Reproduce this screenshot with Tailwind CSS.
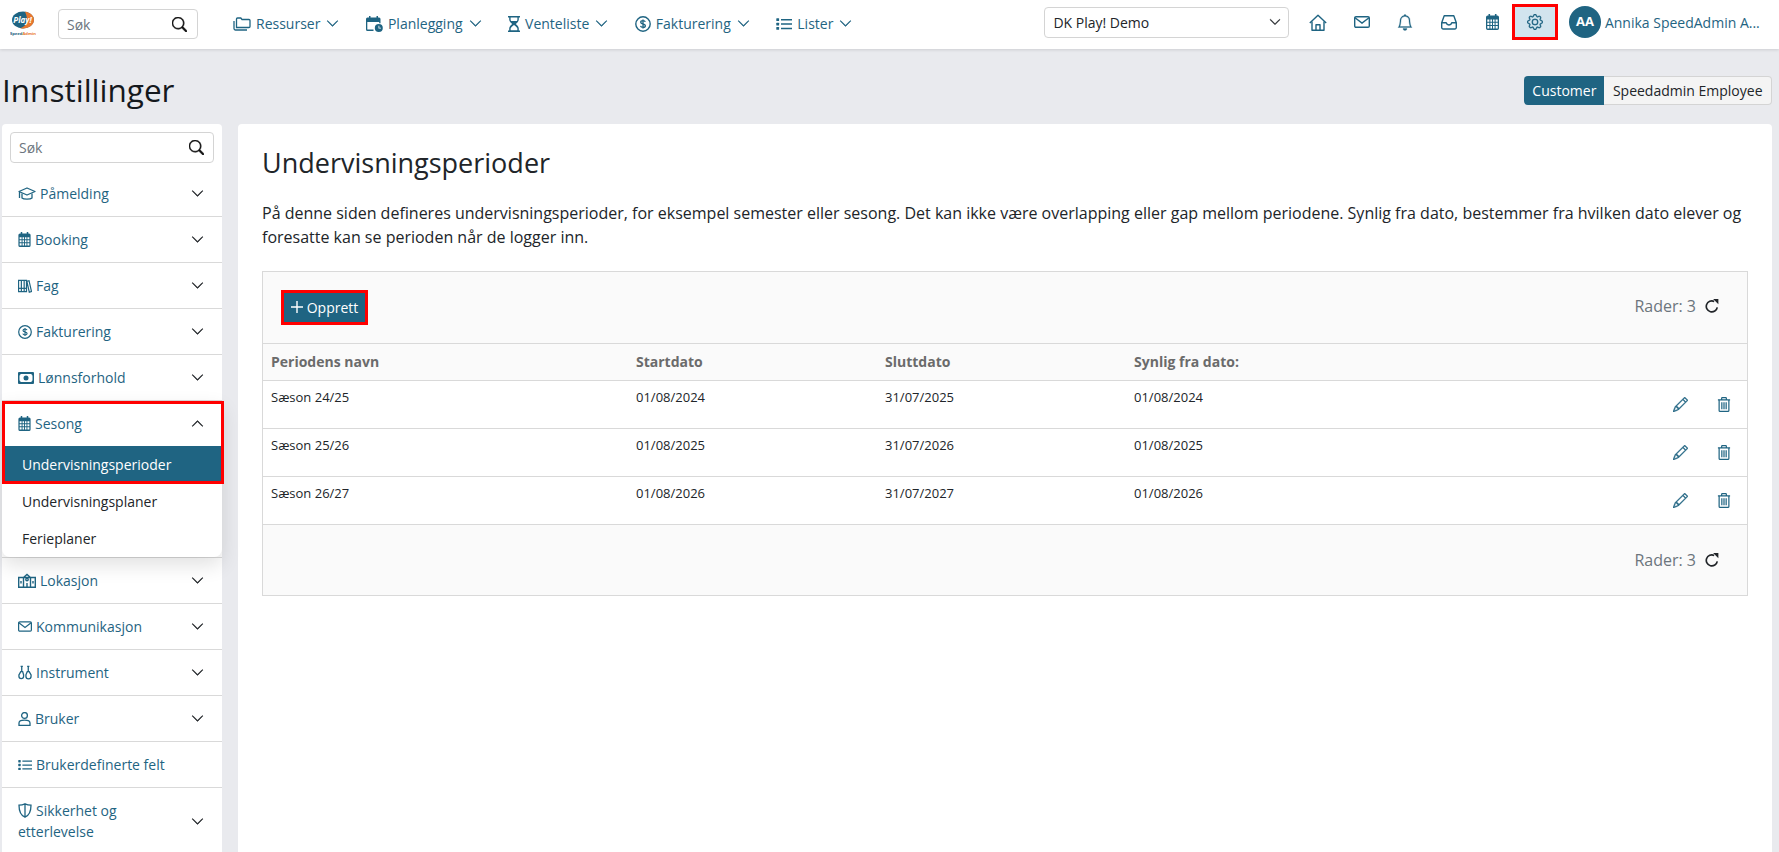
<!DOCTYPE html>
<html lang="no">
<head>
<meta charset="utf-8">
<title>Innstillinger</title>
<script src="https://cdn.jsdelivr.net/npm/@tailwindcss/browser@4"></script>
</head>
<body class="h-screen w-full overflow-hidden bg-[#e9eaee] font-['Open_Sans',sans-serif] text-[#212529]">
<svg class="hidden" aria-hidden="true">
  <symbol id="down" viewBox="0 0 16 16"><path fill="currentColor" stroke="currentColor" stroke-width=".7" fill-rule="evenodd" d="M1.646 4.646a.5.5 0 0 1 .708 0L8 10.293l5.646-5.647a.5.5 0 0 1 .708.708l-6 6a.5.5 0 0 1-.708 0l-6-6a.5.5 0 0 1 0-.708z"/></symbol>
  <symbol id="up" viewBox="0 0 16 16"><path fill="currentColor" stroke="currentColor" stroke-width=".7" fill-rule="evenodd" d="M7.646 4.646a.5.5 0 0 1 .708 0l6 6a.5.5 0 0 1-.708.708L8 5.707l-5.646 5.647a.5.5 0 0 1-.708-.708l6-6z"/></symbol>
  <symbol id="search" viewBox="0 0 16 16"><path fill="currentColor" stroke="currentColor" stroke-width=".6" d="M11.742 10.344a6.5 6.5 0 1 0-1.397 1.398h-.001c.03.04.062.078.098.115l3.85 3.85a1 1 0 0 0 1.415-1.414l-3.85-3.85a1.007 1.007 0 0 0-.115-.1zM12 6.5a5.5 5.5 0 1 1-11 0 5.5 5.5 0 0 1 11 0z"/></symbol>
  <symbol id="cal" viewBox="0 0 13 16"><path fill="currentColor" d="M2.500 0h1.600v1.500h4.800V0h1.600v1.500h.8A1.700 1.700 0 0 1 13 3.200v11.100A1.700 1.700 0 0 1 11.300 16H1.700A1.700 1.700 0 0 1 0 14.300V3.200A1.700 1.700 0 0 1 1.700 1.500h.8z"/><path fill="#fff" d="M1.300 5.500h2.100v2.200H1.300zM4.400 5.500h1.600v2.200H4.400zM7 5.500h1.600v2.200H7zM9.600 5.500h2.100v2.200H9.600zM1.300 8.700h2.100v2.200H1.300zM4.400 8.700h1.600v2.200H4.400zM7 8.700h1.600v2.200H7zM9.600 8.700h2.100v2.200H9.600zM1.300 11.900h2.100v2.500H1.300zM4.400 11.900h1.600v2.500H4.400zM7 11.900h1.600v2.500H7zM9.600 11.900h2.100v2.500H9.600z"/></symbol>
  <symbol id="dollar" viewBox="0 0 16 16"><circle cx="8" cy="8" r="7.2" fill="none" stroke="currentColor" stroke-width="1.400"/><path fill="none" stroke="currentColor" stroke-width="1.300" d="M10.300 5.900C10 4.900 9.100 4.600 8 4.600c-1.300 0-2.300.6-2.300 1.700 0 2.400 4.700 1 4.700 3.400 0 1.100-1 1.700-2.400 1.700-1.300 0-2.200-.5-2.500-1.500M8 3.400v9.200"/></symbol>
  <symbol id="list" viewBox="0 0 16 16"><path fill="currentColor" d="M5 2.900h11v1.500H5zM5 7.300h11v1.500H5zM5 11.700h11v1.500H5z"/><rect x="0.300" y="2.300" width="2.800" height="2.700" rx=".5" fill="currentColor"/><rect x="0.300" y="6.700" width="2.800" height="2.700" rx=".5" fill="currentColor"/><rect x="0.300" y="11.100" width="2.800" height="2.700" rx=".5" fill="currentColor"/></symbol>
  <symbol id="env" viewBox="0 0 16 12"><rect x=".7" y=".7" width="14.600" height="10.600" rx="1.300" fill="none" stroke="currentColor" stroke-width="1.400"/><path d="M1 1.700 8 7l7-5.300" fill="none" stroke="currentColor" stroke-width="1.400"/></symbol>
  <symbol id="pencil" viewBox="0 0 16 16"><path fill="currentColor" stroke="currentColor" stroke-width=".4" d="M12.146.146a.5.5 0 0 1 .708 0l3 3a.5.5 0 0 1 0 .708l-10 10a.5.5 0 0 1-.168.11l-5 2a.5.5 0 0 1-.65-.65l2-5a.5.5 0 0 1 .11-.168l10-10zM11.207 2.500 13.500 4.793 14.793 3.500 12.500 1.207 11.207 2.500zm1.586 3L10.500 3.207 4 9.707V10h.5a.5.5 0 0 1 .5.5v.5h.5a.5.5 0 0 1 .5.5v.5h.293l6.500-6.500zm-9.761 5.175-.106.106-1.528 3.821 3.821-1.528.106-.106A.5.5 0 0 1 5 12.500V12h-.5a.5.5 0 0 1-.5-.5V11h-.5a.5.5 0 0 1-.468-.325z"/></symbol>
  <symbol id="trash" viewBox="0 0 14 16"><path fill="none" stroke="currentColor" stroke-width="1.300" d="M.5 3h13M4.500 3V1.300a.7.7 0 0 1 .7-.7h3.600a.7.7 0 0 1 .7.7V3M1.800 3v11.300a1 1 0 0 0 1 1h8.400a1 1 0 0 0 1-1V3M4.700 5.500v7.500M7 5.500v7.500M9.300 5.500v7.500"/></symbol>
  <symbol id="refresh" viewBox="0 0 16 16"><path fill="none" stroke="currentColor" stroke-width="1.900" d="M14 9.500A6.300 6.300 0 1 1 10.500 2.800"/><path fill="currentColor" d="M9.300 0h6v6z"/></symbol>
</svg>

<header class="relative z-20 flex h-[49px] items-center bg-white shadow-[0_1px_3px_rgba(0,0,0,0.12)]">
  <div class="ml-[10px] mt-[-3px] w-[26px] shrink-0">
    <svg viewBox="0 0 26 26" class="h-[26px] w-[26px]">
      <ellipse cx="13" cy="10" rx="11" ry="8.500" fill="#1f6482"/>
      <path d="M15 1.700c5.500.6 9 4 9 8.300 0 4.800-4.800 8.500-11 8.500-1 0-2-.1-3-.3 4-1 7-4.500 7-8 0-3.500-1-6.500-2-8.500z" fill="#e8782f"/>
      <text x="12.500" y="13" font-size="8" font-weight="700" font-style="italic" fill="#fff" text-anchor="middle" font-family="Open Sans">Play!</text>
      <text x="13" y="25" font-size="4.200" font-weight="700" fill="#1f6482" text-anchor="middle" font-family="Open Sans">Speed<tspan fill="#e8782f">Admin</tspan></text>
    </svg>
  </div>
  <div class="ml-[22px] mt-[-1px] flex h-[30px] w-[140px] shrink-0 items-center rounded border border-[#d4d4d4] bg-white pl-2 pr-[10px]">
    <input placeholder="Søk" class="w-full min-w-0 bg-transparent text-[14px] outline-none placeholder:text-[#6c757d]">
    <svg class="h-[15px] w-[15px] shrink-0 text-[#111]"><use href="#search"/></svg>
  </div>
  <nav class="ml-[35px] mb-[2px] flex items-center gap-[26.500px] text-[14px] text-[#1f6482]">
    <a class="flex items-center gap-[5px]"><svg viewBox="0 0 18 16" class="h-[16px] w-[18px]" fill="none" stroke="currentColor" stroke-width="1.300"><path d="M3.500 11.500V3a1 1 0 0 1 1-1h3.300l1.200 1.500h7a1 1 0 0 1 1 1v6a1 1 0 0 1-1 1z"/><path d="M1 5v7.500a1.500 1.500 0 0 0 1.500 1.500H14"/></svg>Ressurser<svg class="ml-[1px] h-[13px] w-[13px]"><use href="#down"/></svg></a>
    <a class="flex items-center gap-[5px]"><svg viewBox="0 0 17 16" class="h-[16px] w-[17px]" fill="currentColor"><path fill-rule="evenodd" d="M3 0h1.500v1.500h6V0H12v1.500h1a1.500 1.500 0 0 1 1.500 1.500v4.200h-1.300V6H1.300v7.500h6.200V15H1.500A1.500 1.500 0 0 1 0 13.500V3a1.500 1.500 0 0 1 1.500-1.500H3z"/><circle cx="12.800" cy="12" r="4"/><path d="M12.500 9.800h.8v2h1.700v.8h-2.500z" fill="#fff"/></svg>Planlegging<svg class="ml-[1px] h-[13px] w-[13px]"><use href="#down"/></svg></a>
    <a class="flex items-center gap-[5px]"><svg viewBox="0 0 12 16" class="h-[16px] w-[12px]" fill="currentColor"><path fill-rule="evenodd" d="M0 0h12v1.400h-1.200v2.100c0 1.700-1.500 3.300-3 4.500 1.500 1.200 3 2.800 3 4.500v2.100H12V16H0v-1.400h1.200v-2.100c0-1.700 1.500-3.300 3-4.500-1.500-1.200-3-2.800-3-4.500V1.400H0zm2.600 1.400v2c0 .5.200 1 .5 1.500h5.800c.3-.5.500-1 .5-1.500v-2zM6 8.900c-1.800 1.300-3.400 2.600-3.400 3.800l.1 1.500h6.600l.1-1.500C9.400 11.500 7.800 10.200 6 8.900z"/></svg>Venteliste<svg class="ml-[1px] h-[13px] w-[13px]"><use href="#down"/></svg></a>
    <a class="flex items-center gap-[5px]"><svg class="h-[16px] w-[16px]"><use href="#dollar"/></svg>Fakturering<svg class="ml-[1px] h-[13px] w-[13px]"><use href="#down"/></svg></a>
    <a class="flex items-center gap-[5px]"><svg class="h-[16px] w-[16px]"><use href="#list"/></svg>Lister<svg class="ml-[1px] h-[13px] w-[13px]"><use href="#down"/></svg></a>
  </nav>
  <div class="ml-[192px] mb-[5px] flex h-[31px] w-[245px] shrink-0 items-center justify-between rounded border border-[#d4d4d4] bg-white pl-2 pr-[7px] text-[14px] text-[#212529]">
    <span>DK Play! Demo</span>
    <svg class="h-[12px] w-[12px]"><use href="#down"/></svg>
  </div>
  <div class="ml-[7px] mb-[5px] flex items-center text-[#1f6482]">
    <span class="flex h-[36px] w-[43.500px] items-center justify-center"><svg viewBox="0 0 18 17" class="h-[17px] w-[18px]" fill="none" stroke="currentColor" stroke-width="1.400" stroke-linejoin="round"><path d="M.8 9 9 1.200 17.200 9"/><path d="M3 7.500v8.800h12V7.500"/><path d="M7 16.300v-5.500h4v5.500"/></svg></span>
    <span class="flex h-[36px] w-[43.500px] items-center justify-center"><svg class="h-[12px] w-[16px]"><use href="#env"/></svg></span>
    <span class="flex h-[36px] w-[43.500px] items-center justify-center"><svg viewBox="0 0 16 16" class="h-[17px] w-[16px]"><path fill="currentColor" stroke="currentColor" stroke-width=".3" d="M8 16a2 2 0 0 0 2-2H6a2 2 0 0 0 2 2zM8 1.918l-.797.161A4.002 4.002 0 0 0 4 6c0 .628-.134 2.197-.459 3.742-.16.767-.376 1.566-.663 2.258h10.244c-.287-.692-.502-1.490-.663-2.258C12.134 8.197 12 6.628 12 6a4.002 4.002 0 0 0-3.203-3.920L8 1.917zM14.220 12c.223.447.481.801.78 1H1c.299-.199.557-.553.78-1C2.680 10.200 3 6.880 3 6c0-2.420 1.720-4.440 4.005-4.901a1 1 0 1 1 1.990 0A5.002 5.002 0 0 1 13 6c0 .880.320 4.200 1.220 6z"/></svg></span>
    <span class="flex h-[36px] w-[43.500px] items-center justify-center"><svg viewBox="0 0 16 15" class="h-[15px] w-[16px]" fill="none" stroke="currentColor" stroke-width="1.400" stroke-linejoin="round"><path d="M3.200.8h9.600l2.500 7v4.700a1.500 1.500 0 0 1-1.500 1.500H2.200a1.500 1.500 0 0 1-1.500-1.500V7.800z"/><path d="M.8 7.800h4.400a2.900 2.900 0 0 0 5.600 0h4.400"/></svg></span>
    <span class="flex h-[36px] w-[43.500px] items-center justify-center"><svg class="h-[16px] w-[13px]"><use href="#cal"/></svg></span>
    <span class="ml-[-2px] flex h-[36px] w-[46px] items-center justify-center border-[3px] border-[#f00] bg-[#d2e4ee]"><svg viewBox="0 0 16 16" class="h-[16px] w-[16px]" fill="currentColor" stroke="currentColor" stroke-width=".3"><path d="M8 4.754a3.246 3.246 0 1 0 0 6.492 3.246 3.246 0 0 0 0-6.492zM5.754 8a2.246 2.246 0 1 1 4.492 0 2.246 2.246 0 0 1-4.492 0z"/><path d="M9.796 1.343c-.527-1.790-3.065-1.790-3.592 0l-.094.319a.873.873 0 0 1-1.255.520l-.292-.160c-1.640-.892-3.433.902-2.540 2.541l.159.292a.873.873 0 0 1-.520 1.255l-.319.094c-1.790.527-1.790 3.065 0 3.592l.319.094a.873.873 0 0 1 .520 1.255l-.160.292c-.892 1.640.901 3.434 2.541 2.540l.292-.159a.873.873 0 0 1 1.255.520l.094.319c.527 1.790 3.065 1.790 3.592 0l.094-.319a.873.873 0 0 1 1.255-.520l.292.160c1.640.893 3.434-.902 2.540-2.541l-.159-.292a.873.873 0 0 1 .520-1.255l.319-.094c1.790-.527 1.790-3.065 0-3.592l-.319-.094a.873.873 0 0 1-.520-1.255l.160-.292c.893-1.640-.902-3.433-2.541-2.540l-.292.159a.873.873 0 0 1-1.255-.520l-.094-.319zm-2.633.283c.246-.835 1.428-.835 1.674 0l.094.319a1.873 1.873 0 0 0 2.693 1.115l.291-.160c.764-.415 1.600.420 1.184 1.185l-.159.292a1.873 1.873 0 0 0 1.116 2.692l.318.094c.835.246.835 1.428 0 1.674l-.319.094a1.873 1.873 0 0 0-1.115 2.693l.160.291c.415.764-.420 1.600-1.185 1.184l-.291-.159a1.873 1.873 0 0 0-2.693 1.116l-.094.318c-.246.835-1.428.835-1.674 0l-.094-.319a1.873 1.873 0 0 0-2.692-1.115l-.292.160c-.764.415-1.600-.420-1.184-1.185l.159-.291A1.873 1.873 0 0 0 1.945 8.930l-.319-.094c-.835-.246-.835-1.428 0-1.674l.319-.094A1.873 1.873 0 0 0 3.060 4.377l-.160-.292c-.415-.764.420-1.600 1.185-1.184l.292.159a1.873 1.873 0 0 0 2.692-1.115l.094-.319z"/></svg></span>
  </div>
  <div class="ml-[11px] mb-[5px] flex min-w-0 items-center gap-[4px]">
    <span class="flex h-[32px] w-[32px] shrink-0 items-center justify-center rounded-full bg-[#1f6482] text-[13px] font-bold text-white">AA</span>
    <span class="whitespace-nowrap text-[14px] text-[#1f6482]">Annika SpeedAdmin A...</span>
  </div>
</header>

<div class="flex h-[75px] items-center justify-between pl-[2px] pr-[7px]">
  <h1 class="mt-[6px] text-[31.500px] leading-[36px] font-medium text-[#15191d]">Innstillinger</h1>
  <div class="mt-[7px] flex h-[29px] text-[14px]">
    <span class="flex items-center rounded-l bg-[#1f6482] px-[8px] font-medium text-white">Customer</span>
    <span class="flex items-center rounded-r border border-l-0 border-[#d4d4d4] bg-[#f4f4f4] px-[8.500px] text-[#212529]">Speedadmin Employee</span>
  </div>
</div>

<div class="flex h-[728px] items-stretch gap-[16px] pl-[2px] pr-[7px]">
  <aside class="relative w-[220px] shrink-0 rounded-t bg-white text-[14px] text-[#1f6482]">
    <div class="px-2 pt-2 pb-2">
      <div class="flex h-[31px] items-center rounded border border-[#d4d4d4] pl-2 pr-[9px]">
        <input placeholder="Søk" class="w-full min-w-0 bg-transparent text-[14px] outline-none placeholder:text-[#6c757d]">
        <svg class="h-[15px] w-[15px] shrink-0 text-[#111]"><use href="#search"/></svg>
      </div>
    </div>
    <div class="flex h-[46px] items-center justify-between border-b border-[#d9d9d9] pl-4 pr-[18px]">
      <span class="flex items-center"><svg viewBox="0 0 18 16" class="mr-[4px] h-[16px] w-[18px]" fill="none" stroke="currentColor" stroke-width="1.300" stroke-linejoin="round"><path d="M1 5.500 9 2l8 3.500L9 9z"/><path d="M4 7.500v4.500c1.500 1.500 8.500 1.500 10 0V7.500"/><path d="M1.500 6v6"/></svg>Påmelding</span>
      <svg class="h-[13px] w-[13px] text-[#212529]"><use href="#down"/></svg>
    </div>
    <div class="flex h-[46px] items-center justify-between border-b border-[#d9d9d9] pl-4 pr-[18px]">
      <span class="flex items-center"><svg class="mr-[4px] h-[15px] w-[13px]"><use href="#cal"/></svg>Booking</span>
      <svg class="h-[13px] w-[13px] text-[#212529]"><use href="#down"/></svg>
    </div>
    <div class="flex h-[46px] items-center justify-between border-b border-[#d9d9d9] pl-4 pr-[18px]">
      <span class="flex items-center"><svg viewBox="0 0 15 14" class="mr-[4px] h-[14px] w-[14px]" fill="none" stroke="currentColor" stroke-width="1.300"><path d="M.6 1h3v12h-3zM3.600 1h3v12h-3zM6.600 1h2.500v12H6.600zM9.500 2l2.300-.7L14.500 13l-2.400.6z"/><path d="M.6 9.500h8.500"/></svg>Fag</span>
      <svg class="h-[13px] w-[13px] text-[#212529]"><use href="#down"/></svg>
    </div>
    <div class="flex h-[46px] items-center justify-between border-b border-[#d9d9d9] pl-4 pr-[18px]">
      <span class="flex items-center"><svg class="mr-[4px] h-[14px] w-[14px]"><use href="#dollar"/></svg>Fakturering</span>
      <svg class="h-[13px] w-[13px] text-[#212529]"><use href="#down"/></svg>
    </div>
    <div class="flex h-[46px] items-center justify-between border-b border-[#d9d9d9] pl-4 pr-[18px]">
      <span class="flex items-center"><svg viewBox="0 0 16 12" class="mr-[4px] h-[12px] w-[16px]" fill="currentColor"><path fill-rule="evenodd" d="M1 0h14a1 1 0 0 1 1 1v10a1 1 0 0 1-1 1H1a1 1 0 0 1-1-1V1a1 1 0 0 1 1-1zm1.500 2A1.500 1.500 0 0 1 1.500 3.500v5a1.500 1.500 0 0 1 1 1.500h11a1.500 1.500 0 0 1 1-1.500v-5a1.500 1.500 0 0 1-1-1.500z"/><circle cx="8" cy="6" r="2.500"/></svg>Lønnsforhold</span>
      <svg class="h-[13px] w-[13px] text-[#212529]"><use href="#down"/></svg>
    </div>

    <div class="relative z-10 rounded-b-lg bg-white shadow-[0_8px_20px_rgba(0,0,0,0.12)]">
      <div class="flex h-[45px] items-center justify-between pl-4 pr-[18px]">
        <span class="flex items-center"><svg class="mr-[4px] h-[15px] w-[13px]"><use href="#cal"/></svg>Sesong</span>
        <svg class="h-[13px] w-[13px] text-[#212529]"><use href="#up"/></svg>
      </div>
      <div class="flex h-[37px] items-center bg-[#1f6482] pl-[20px] font-medium text-white">Undervisningsperioder</div>
      <div class="flex h-[37px] items-center pl-[20px] text-[#212529]">Undervisningsplaner</div>
      <div class="flex h-[37px] items-center pl-[20px] text-[#212529]">Ferieplaner</div>
      <div class="pointer-events-none absolute left-0 right-[-2px] top-0 h-[83px] border-[3px] border-[#f00]"></div>
    </div>

    <div class="flex h-[47px] items-center justify-between border-y border-[#d9d9d9] pl-4 pr-[18px]">
      <span class="flex items-center"><svg viewBox="0 0 18 15" class="mr-[4px] h-[15px] w-[18px]" fill="none" stroke="currentColor" stroke-width="1.400"><path d="M.7 4.500h16.600v9.800H.7zM5.500 4.500l3.500-3 3.500 3V14.300h-7z"/><circle cx="9" cy="6.500" r="1.200"/><path d="M3 8v2.500M15 8v2.500M9 10v4.300"/></svg>Lokasjon</span>
      <svg class="h-[13px] w-[13px] text-[#212529]"><use href="#down"/></svg>
    </div>
    <div class="flex h-[46px] items-center justify-between border-b border-[#d9d9d9] pl-4 pr-[18px]">
      <span class="flex items-center"><svg class="mr-[4px] h-[11px] w-[14px]"><use href="#env"/></svg>Kommunikasjon</span>
      <svg class="h-[13px] w-[13px] text-[#212529]"><use href="#down"/></svg>
    </div>
    <div class="flex h-[46px] items-center justify-between border-b border-[#d9d9d9] pl-4 pr-[18px]">
      <span class="flex items-center"><svg viewBox="0 0 15 15" class="mr-[4px] h-[15px] w-[14px]" fill="none" stroke="currentColor" stroke-width="1.400"><path d="M4 1v5M2.800 1h2.400M3 6.500 1 10v1.500a2.500 2.500 0 0 0 5 0V10L5 6.500z"/><path d="M11 1v5M9.800 1h2.400M10 6.500 8.500 10v1.500a2.500 2.500 0 0 0 5.500 0V10L12 6.500z"/></svg>Instrument</span>
      <svg class="h-[13px] w-[13px] text-[#212529]"><use href="#down"/></svg>
    </div>
    <div class="flex h-[46px] items-center justify-between border-b border-[#d9d9d9] pl-4 pr-[18px]">
      <span class="flex items-center"><svg viewBox="0 0 13 14" class="mr-[4px] h-[14px] w-[13px]" fill="none" stroke="currentColor" stroke-width="1.300"><circle cx="6.500" cy="3.500" r="2.900"/><path d="M1 13.400V11c0-1.500 1.500-2.800 5.500-2.800S12 9.500 12 11v2.400z"/></svg>Bruker</span>
      <svg class="h-[13px] w-[13px] text-[#212529]"><use href="#down"/></svg>
    </div>
    <div class="flex h-[46px] items-center border-b border-[#d9d9d9] pl-4 pr-[18px]">
      <svg class="mr-[4px] h-[14px] w-[14px]"><use href="#list"/></svg>Brukerdefinerte felt
    </div>
    <div class="flex items-center justify-between py-3 pl-4 pr-[18px] leading-[21px]">
      <span><svg viewBox="0 0 14 15" class="mr-[4px] inline h-[15px] w-[14px] align-[-2px]" fill="none" stroke="currentColor" stroke-width="1.300"><path d="M7 .8c2 .9 4 1.300 6 1.400 0 6-1.500 10-6 12-4.500-2-6-6-6-12 2-.1 4-.5 6-1.400zM7 .8v13.400"/></svg>Sikkerhet og<br>etterlevelse</span>
      <svg class="h-[13px] w-[13px] text-[#212529]"><use href="#down"/></svg>
    </div>
  </aside>

  <main class="min-w-0 flex-1 rounded-t bg-white px-[24px] pt-[19px]">
    <h2 class="text-[27px] leading-[40px] font-medium text-[#212529]">Undervisningsperioder</h2>
    <p class="mt-[18px] text-[16px] leading-[24px] text-[#212529]">På denne siden defineres undervisningsperioder, for eksempel semester eller sesong. Det kan ikke være overlapping eller gap mellom periodene. Synlig fra dato, bestemmer fra hvilken dato elever og foresatte kan se perioden når de logger inn.</p>

    <div class="mt-[22px] border border-[#d9d9d9]">
      <div class="flex h-[72px] items-center justify-between border-b border-[#d9d9d9] bg-[#fafafa] pl-[18px] pr-[28px]">
        <button class="mb-[1px] flex h-[35px] w-[87px] items-center justify-center gap-[4px] border-[3px] border-[#f00] bg-[#1f6482] text-[14px] text-white"><svg viewBox="0 0 12 12" class="h-[12px] w-[12px]" fill="none" stroke="currentColor" stroke-width="1.400"><path d="M6 0v12M0 6h12"/></svg>Opprett</button>
        <div class="mb-[3px] flex items-center gap-[9px] text-[#6c757d]"><span class="text-[16px]">Rader: 3</span><svg class="h-[14px] w-[14px] text-[#212529]"><use href="#refresh"/></svg></div>
      </div>
      <table class="w-full table-fixed border-collapse text-[13px]">
        <colgroup><col class="w-[365px]"><col class="w-[249px]"><col class="w-[249px]"><col><col class="w-[110px]"></colgroup>
        <thead class="bg-[#fafafa] text-[#6b6b6b]">
          <tr class="h-[36px] border-b border-[#d9d9d9]">
            <th class="px-2 text-left text-[14px] font-bold">Periodens navn</th>
            <th class="px-2 text-left text-[14px] font-bold">Startdato</th>
            <th class="px-2 text-left text-[14px] font-bold">Sluttdato</th>
            <th class="px-2 text-left text-[14px] font-bold">Synlig fra dato:</th>
            <th></th>
          </tr>
        </thead>
        <tbody>
          <tr class="h-[48px] border-b border-[#d9d9d9]">
            <td class="px-2 pb-[12px]">Sæson 24/25</td><td class="px-2 pb-[12px]">01/08/2024</td><td class="px-2 pb-[12px]">31/07/2025</td><td class="px-2 pb-[12px]">01/08/2024</td>
            <td><div class="flex justify-end gap-[29px] pr-[16px] text-[#1f6482]"><svg class="h-[15px] w-[15px]"><use href="#pencil"/></svg><svg class="h-[15px] w-[14px]"><use href="#trash"/></svg></div></td>
          </tr>
          <tr class="h-[48px] border-b border-[#d9d9d9]">
            <td class="px-2 pb-[12px]">Sæson 25/26</td><td class="px-2 pb-[12px]">01/08/2025</td><td class="px-2 pb-[12px]">31/07/2026</td><td class="px-2 pb-[12px]">01/08/2025</td>
            <td><div class="flex justify-end gap-[29px] pr-[16px] text-[#1f6482]"><svg class="h-[15px] w-[15px]"><use href="#pencil"/></svg><svg class="h-[15px] w-[14px]"><use href="#trash"/></svg></div></td>
          </tr>
          <tr class="h-[48px] border-b border-[#d9d9d9]">
            <td class="px-2 pb-[12px]">Sæson 26/27</td><td class="px-2 pb-[12px]">01/08/2026</td><td class="px-2 pb-[12px]">31/07/2027</td><td class="px-2 pb-[12px]">01/08/2026</td>
            <td><div class="flex justify-end gap-[29px] pr-[16px] text-[#1f6482]"><svg class="h-[15px] w-[15px]"><use href="#pencil"/></svg><svg class="h-[15px] w-[14px]"><use href="#trash"/></svg></div></td>
          </tr>
        </tbody>
      </table>
      <div class="flex h-[70px] items-center justify-end bg-[#fafafa] pr-[28px]">
        <div class="flex items-center gap-[9px] text-[#6c757d]"><span class="text-[16px]">Rader: 3</span><svg class="h-[14px] w-[14px] text-[#212529]"><use href="#refresh"/></svg></div>
      </div>
    </div>
  </main>
</div>
</body>
</html>
